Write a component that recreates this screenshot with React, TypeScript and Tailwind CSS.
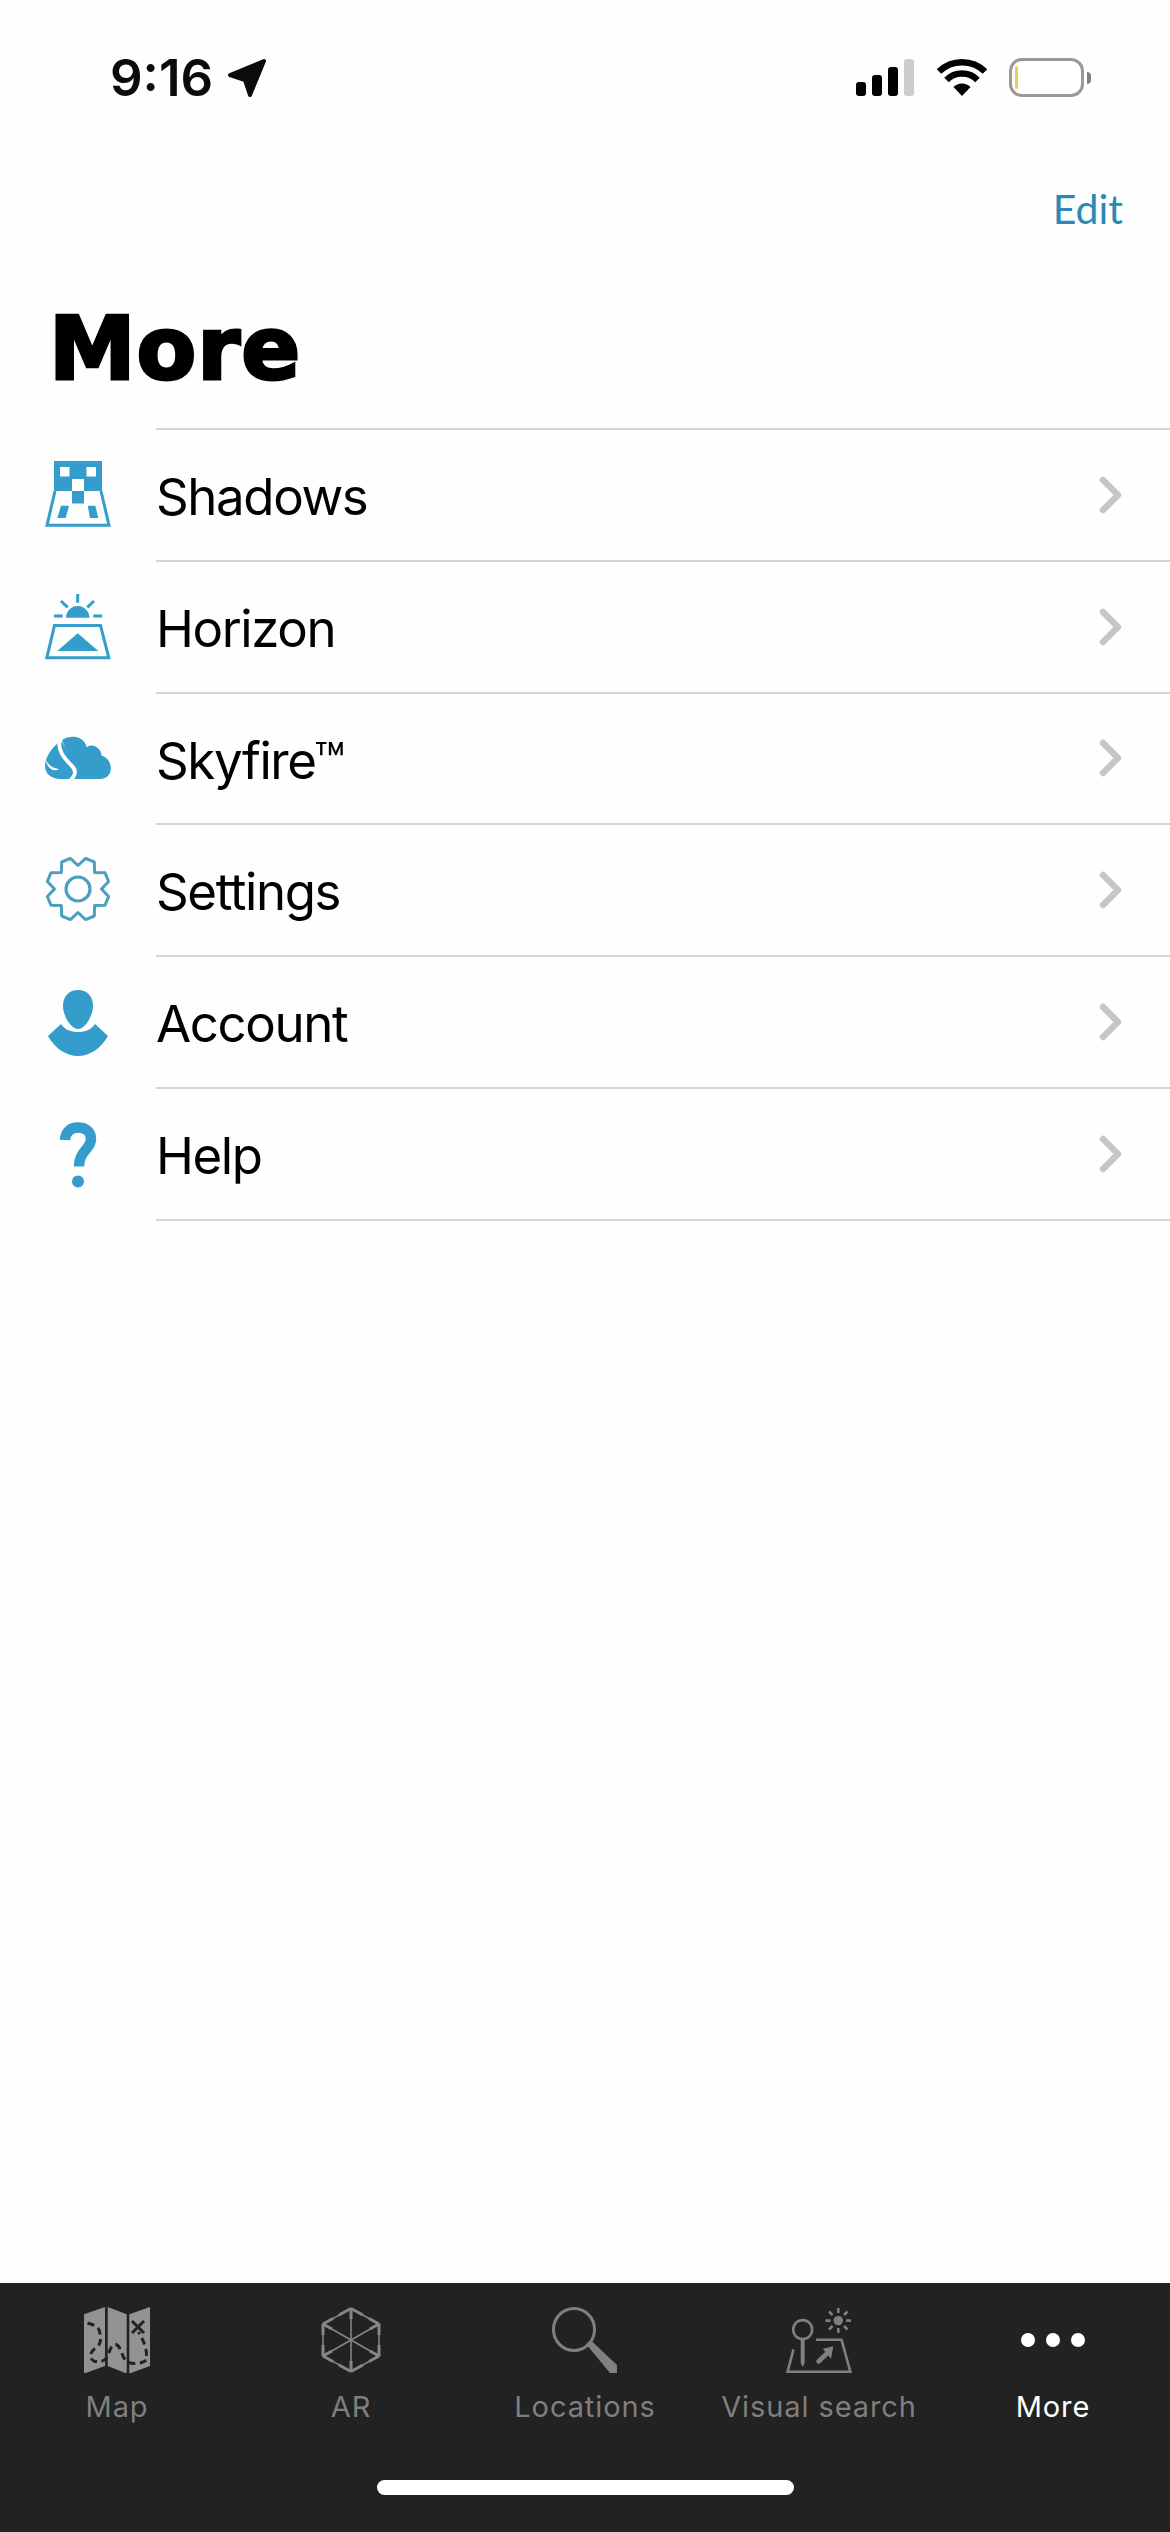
const ShadowsIcon = () => (
  <svg viewBox="0 0 70 70" className="w-[70px] h-[70px]">
    <rect x="10" y="2" width="48" height="30" fill="#359dcb" />
    <rect x="16" y="8" width="9.5" height="9.5" fill="#fff" />
    <rect x="42.5" y="8" width="9.5" height="9.5" fill="#fff" />
    <rect x="28" y="20" width="12" height="12" fill="#fff" />
    <rect x="28" y="32" width="12" height="12.5" fill="#359dcb" />
    <path d="M11 32 L3 66.3 H65 L57 32" fill="none" stroke="#359dcb" strokeWidth="3" />
    <path d="M17 46.7 H25 L21.7 59 H13.3 Z M43.7 46.7 H51.3 L54.3 59 H46 Z" fill="#359dcb" />
  </svg>
);

const HorizonIcon = () => (
  <svg viewBox="0 0 70 70" className="w-[70px] h-[70px]">
    <path d="M22 26.7 A11.7 11.7 0 0 1 45.4 26.7 Z" fill="#359dcb" />
    <path
      d="M33.7 3 V11.7 M17 10 L23.7 16.3 M50 10 L43.3 16.3 M10 25 H18.7 M49.3 25 H58.3"
      stroke="#359dcb"
      strokeWidth="3"
      fill="none"
    />
    <path d="M10.5 34.5 H56.5 L64.8 66.8 H2.8 Z" fill="none" stroke="#359dcb" strokeWidth="3" />
    <path d="M33.7 42.3 L54.3 60 H13.3 Z" fill="#359dcb" />
  </svg>
);

const SkyfireIcon = () => (
  <svg viewBox="0 0 70 70" className="w-[70px] h-[70px]">
    {/* flame */}
    <path
      d="M14 21 C8 26 1 35 1 44 C1 52 8 57 16 57 H30 L30 40 L18 20 Z"
      fill="#359dcb"
    />
    {/* cloud */}
    <path
      d="M18 18.5 C21 15 27 14.5 31 14.7 C37 15.5 42 20 42.7 25.5 C45 23 49 23 51.5 24.5 C55 26.5 57.5 29.5 57.5 33.5 C63 35 66.8 40 66.8 46.5 C66.8 53 62 57 56 57 H28 L28 40 Z"
      fill="#359dcb"
    />
    {/* white s curve and crescent */}
    <path d="M16 17 C13 28 20 36 27 43 C32.5 48 32.5 53 25.5 59" fill="none" stroke="#fff" strokeWidth="3.8" />
    <path d="M1.5 37 C4 43 9 46.5 15 47 C9 50.5 3 46 1.5 37 Z" fill="#fff" />
  </svg>
);

const GearIcon = () => {
  const points: string[] = [];
  const n = 8;
  for (let i = 0; i < n; i++) {
    const a = (i / n) * Math.PI * 2 + Math.PI / 8 - Math.PI / 2;
    const p = (r: number, d: number) =>
      `${(34 + r * Math.cos(a + d)).toFixed(1)} ${(35 + r * Math.sin(a + d)).toFixed(1)}`;
    points.push(`${i === 0 ? "M" : "L"}${p(31.5, -0.15)} L${p(31.5, 0.15)} L${p(23.5, Math.PI / 8)}`);
  }
  return (
    <svg viewBox="0 0 70 70" className="w-[70px] h-[70px]">
      <path d={points.join(" ") + " Z"} fill="none" stroke="#4c9fc1" strokeWidth="3" strokeLinejoin="round" />
      <circle cx="34" cy="35" r="12" fill="none" stroke="#4c9fc1" strokeWidth="3.2" />
    </svg>
  );
};

const AccountIcon = () => (
  <svg viewBox="0 0 70 70" className="w-[70px] h-[70px]">
    <path d="M34 4 C44 4 49 11 49 20 C49 30 41 43 34 43 C27 43 19 30 19 20 C19 11 24 4 34 4 Z" fill="#359dcb" />
    <path d="M17 38 C21 44 27 46 34 46 C41 46 47 44 51 38 L64 50 C57 63 45 70 34 70 C23 70 11 63 4 50 Z" fill="#359dcb" />
  </svg>
);

const HelpIcon = () => (
  <svg viewBox="0 0 70 70" className="w-[70px] h-[70px]">
    <path
      d="M21 22 C21.5 13 27 9.5 34 9.5 C42 9.5 47 14 47 21 C47 31 35 33 35 48.5"
      fill="none"
      stroke="#359dcb"
      strokeWidth="10.5"
    />
    <circle cx="34" cy="63.5" r="6" fill="#359dcb" />
  </svg>
);

const MapIcon = () => (
  <svg viewBox="0 0 66 66" className="w-[66px] h-[66px]">
    <path
      d="M0 7.3 L21 0 V59 L0 66.6 Z M23.7 0 L42.7 7.3 V66.6 L23.7 59 Z M45.3 7.3 L66 0 V59 L45.3 66.6 Z"
      fill="#929292"
    />
    <path
      d="M3.5 16 C10 18 16 20 16 27 C17 33 17 37 12 41 C6 44 4 52 11 54.5 C17 55 21 54 24 49 C26 42 28 37 32 37.5 C37 39 37 48 42 54 C47 58 58 57 62.5 53 C63 47 62 41 60 36 C58 31 56 28 54.5 25"
      fill="none"
      stroke="#222"
      strokeWidth="3"
      strokeDasharray="7 4.5"
    />
    <path d="M48 14 L60 26 M60 14 L48 26" stroke="#222" strokeWidth="3" />
  </svg>
);

const ArIcon = () => (
  <svg viewBox="0 0 60 66" className="w-[60px] h-[66px]">
    <path
      d="M30 1.5 L58 17 V49 L30 64.5 L2 49 V17 Z M30 1.5 V64.5 M2 17 L58 49 M58 17 L2 49"
      fill="none"
      stroke="#868686"
      strokeWidth="1.5"
    />
    <path
      d="M30 1.5 L42 8 M30 1.5 L18 8 M30 1.5 V12 M2 17 L12 11.5 M2 17 V28 M2 17 L11 22 M58 17 L48 11.5 M58 17 V28 M58 17 L49 22 M2 49 V38 M2 49 L12 54.5 M2 49 L11 44 M58 49 V38 M58 49 L48 54.5 M58 49 L49 44 M30 64.5 L18 58 M30 64.5 L42 58 M30 64.5 V54"
      fill="none"
      stroke="#868686"
      strokeWidth="3"
    />
  </svg>
);

const SearchIcon = () => (
  <svg viewBox="0 0 66 66" className="w-[66px] h-[66px]">
    <ellipse cx="22" cy="22.5" rx="20.5" ry="21" fill="none" stroke="#808080" strokeWidth="3" />
    <path d="M34 37 L38.5 33 L65 58 V66 H58 Z" fill="#808080" />
  </svg>
);

const VisualSearchIcon = () => (
  <svg viewBox="0 0 66 66" className="w-[66px] h-[66px]">
    <circle cx="52.3" cy="13.6" r="4.7" fill="#808080" />
    <path
      d="M52.3 1 V6 M52.3 21 V26 M39.5 13.6 H44.5 M60 13.6 H65 M43 4.5 L46.5 8 M58 19 L61.5 22.5 M61.5 4.5 L58 8 M46.5 19 L43 22.5"
      stroke="#808080"
      strokeWidth="2.6"
      fill="none"
    />
    <circle cx="16.7" cy="22.6" r="9.5" fill="none" stroke="#808080" strokeWidth="2.6" />
    <path d="M14.7 32 H18.7 V56 L16.7 60 L14.7 56 Z" fill="#808080" />
    <path d="M7.5 42.3 L1.6 64.8 H64.4 L55.5 32.7 H30" fill="none" stroke="#808080" strokeWidth="2.6" />
    <path d="M32.5 54.5 L43 44.5" stroke="#808080" strokeWidth="4.5" strokeLinecap="round" />
    <path d="M47.3 39.3 L36.7 41.7 L45 51.7 Z" fill="#808080" />
  </svg>
);

const DotsIcon = () => (
  <div className="h-[66px] flex items-center gap-[11px]">
    <div className="w-[14px] h-[14px] rounded-full bg-white" />
    <div className="w-[14px] h-[14px] rounded-full bg-white" />
    <div className="w-[14px] h-[14px] rounded-full bg-white" />
  </div>
);

const Chevron = () => (
  <svg viewBox="0 0 24 38" className="w-[24px] h-[38px]">
    <path d="M4 4 L19 19 L4 34" fill="none" stroke="#c6c6c6" strokeWidth="6.5" strokeLinecap="round" strokeLinejoin="round" />
  </svg>
);

const rows = [
  { label: "Shadows", icon: <ShadowsIcon /> },
  { label: "Horizon", icon: <HorizonIcon /> },
  { label: "Skyfire™", icon: <SkyfireIcon /> },
  { label: "Settings", icon: <GearIcon /> },
  { label: "Account", icon: <AccountIcon /> },
  { label: "Help", icon: <HelpIcon /> },
];

const tabs = [
  { label: "Map", icon: <MapIcon /> },
  { label: "AR", icon: <ArIcon /> },
  { label: "Locations", icon: <SearchIcon /> },
  { label: "Visual search", icon: <VisualSearchIcon /> },
  { label: "More", icon: <DotsIcon />, active: true },
];

const App = () => {
  return (
    <div className="w-[1170px] h-[2532px] bg-[#fefefe] flex flex-col overflow-hidden">
      {/* STATUS BAR */}
      <div className="h-[184px] pt-[56px] pl-[110px] pr-[79px] flex justify-between items-start shrink-0">
        <div className="flex items-center gap-[14px] h-[44px]">
          <span className="font-['Inter',sans-serif] font-semibold text-[51px] leading-[44px] text-[#0b0b0b]">
            9:16
          </span>
          <svg viewBox="0 0 40 40" className="w-[40px] h-[40px]">
            <path d="M37 3 L3 17 L18 22 L23 37 Z" fill="#0b0b0b" stroke="#0b0b0b" strokeWidth="4" strokeLinejoin="round" />
          </svg>
        </div>
        <div className="flex items-start h-[44px]">
          <div className="flex items-end gap-[6px] h-[37px] mt-[3px]">
            <div className="w-[10px] h-[14px] rounded-[3px] bg-black" />
            <div className="w-[10px] h-[21px] rounded-[3px] bg-black" />
            <div className="w-[10px] h-[29px] rounded-[3px] bg-black" />
            <div className="w-[10px] h-[37px] rounded-[3px] bg-[#cccccc]" />
          </div>
          <svg viewBox="0 0 52 38" className="w-[52px] h-[38px] ml-[22px] mt-[2px]">
            <path d="M26 38 L17.5 29 A12 12 0 0 1 34.5 29 Z" fill="#000" />
            <path d="M10.5 22 A22 22 0 0 1 41.5 22" fill="none" stroke="#000" strokeWidth="6.5" />
            <path d="M3 13.5 A33 33 0 0 1 49 13.5" fill="none" stroke="#000" strokeWidth="6.5" />
          </svg>
          <div className="ml-[21px] w-[75px] h-[39px] mt-[2px] rounded-[13px] border-[3px] border-[#999999] pl-[3px] py-[5px] bg-white">
            <div className="w-[3px] h-full rounded-[2px] bg-[#e6cf5c]" />
          </div>
          <div className="w-[4px] h-[12px] mt-[16px] ml-[3px] rounded-r-[4px] bg-[#808080]" />
        </div>
      </div>

      {/* EDIT LINK */}
      <div className="h-[50px] pr-[47px] flex justify-end items-center shrink-0 font-['Lato',sans-serif] text-[41px] text-[#2a8ab5]">
        Edit
      </div>

      {/* TITLE */}
      <div className="h-[194px] pl-[49px] shrink-0">
        <h1 className="font-['DejaVu_Sans',sans-serif] font-bold text-[87px] leading-[90px] mt-[70px] tracking-[1px] [-webkit-text-stroke:3px_black] text-black">
          More
        </h1>
      </div>

      {/* LIST */}
      <div className="flex flex-col flex-1">
        {rows.map((row, index) => (
          <div key={index} className="flex h-[131.75px] shrink-0">
            <div className="w-[156px] pl-[44px] flex items-center shrink-0">{row.icon}</div>
            <div className="flex-1 flex items-center justify-between border-t-2 border-[#d4d4d4] pr-[47px]">
              <span className="font-['Inter',sans-serif] text-[51px] tracking-[-1.4px] mt-[5px] text-black">
                {row.label}
              </span>
              <Chevron />
            </div>
          </div>
        ))}
        <div className="ml-[156px] border-t-2 border-[#d4d4d4]" />
      </div>

      {/* TAB BAR */}
      <div className="h-[249px] bg-[#222222] shrink-0 flex flex-col">
        <div className="grid grid-cols-5 pt-[24px]">
          {tabs.map((tab, index) => (
            <div key={index} className="flex flex-col items-center">
              <div className="h-[66px] flex items-center justify-center">{tab.icon}</div>
              <span
                className={`font-['Inter',sans-serif] text-[29px] leading-[34px] mt-[17px] tracking-[0.9px] whitespace-nowrap ${
                  tab.active ? "text-white" : "text-[#7f7f7f]"
                }`}
              >
                {tab.label}
              </span>
            </div>
          ))}
        </div>
        <div className="mt-[56px] self-center w-[417px] h-[15px] rounded-full bg-white" />
      </div>
    </div>
  );
};

export default App;
